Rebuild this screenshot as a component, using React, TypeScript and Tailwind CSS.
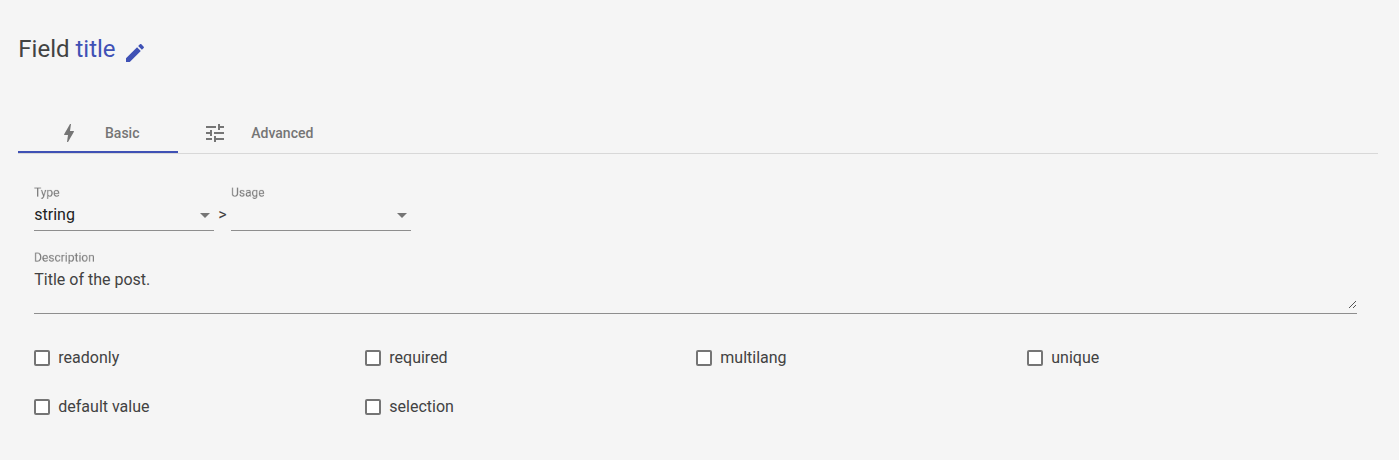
import React from "react";

const PATHS = {
  edit: "M3 17.25V21h3.75L17.81 9.94l-3.75-3.75L3 17.25zM20.71 7.04c.39-.39.39-1.02 0-1.41l-2.34-2.34c-.39-.39-1.02-.39-1.41 0l-1.83 1.83 3.75 3.75 1.83-1.83z",
  bolt: "M11 21h-1l1-7H7.5c-.58 0-.57-.32-.38-.66.19-.34.05-.08.07-.12C8.48 10.94 10.42 7.54 13 3h1l-1 7h3.5c.49 0 .56.33.47.51l-.07.15C12.96 17.55 11 21 11 21z",
  tune: "M3 17v2h6v-2H3zM3 5v2h10V5H3zm10 16v-2h8v-2h-8v-2h-2v6h2zM7 9v2H3v2h4v2h2V9H7zm14 4v-2H11v2h10zm-6-4h2V7h4V5h-4V3h-2v6z",
};

function Icon({ path, className }: { path: string; className: string }) {
  return (
    <svg viewBox="0 0 24 24" fill="currentColor" className={className}>
      <path d={path} />
    </svg>
  );
}

function FloatingLabel({ text }: { text: string }) {
  return (
    <div className="h-[15px] origin-top-left translate-y-[0.3px] scale-75 whitespace-nowrap text-[16px] leading-5 text-[#757575] will-change-transform">
      {text}
    </div>
  );
}

function Select({ label, value }: { label: string; value: string }) {
  return (
    <div className="h-[46px] w-[180px] border-b border-[#8e8e8e]">
      <FloatingLabel text={label} />
      <div className="flex h-[30px] items-center justify-between pr-1">
        <span className="pl-[0.3px] text-[16px] leading-[18px] text-[#212121]">{value}</span>
        <svg viewBox="0 0 10 5" className="h-[5px] w-[10px] fill-[#757575]">
          <path d="M0 0h10L5 5z" />
        </svg>
      </div>
    </div>
  );
}

function Check({ label }: { label: string }) {
  return (
    <label className="flex h-[49px] w-[331px] items-center gap-2">
      <span className="size-4 rounded-[2px] border-2 border-[#757575] bg-white" />
      <span className="pl-[0.3px] text-[16px] leading-6">{label}</span>
    </label>
  );
}

export default function App() {
  return (
    <main className="h-[460px] w-full bg-[#f5f5f5] pl-[18px] pr-[21px] font-[Roboto,sans-serif] text-[#424242]">
      <h1 className="flex h-[113px] items-start pt-[33px] text-[24px] leading-8">
        <span className="w-[105px] whitespace-nowrap pl-[0.3px]">
          Field <span className="text-[#3f51b5]">title</span>
        </span>
        <Icon path={PATHS.edit} className="mt-[8px] size-6 text-[#3f51b5]" />
      </h1>
      <nav className="flex h-[41px] border-b border-[#d8d8d8] text-[14px] font-medium text-[#757575]">
        <div className="flex h-[40px] w-[160px] items-center border-b-2 border-[#3f51b5] pl-[39px] pt-[2px]">
          <Icon path={PATHS.bolt} className="size-6" />
          <span className="ml-6">Basic</span>
        </div>
        <div className="flex h-[40px] items-center pl-[25px]">
          <Icon path={PATHS.tune} className="size-6" />
          <span className="ml-6 pl-[0.3px]">Advanced</span>
        </div>
      </nav>
      <section className="pl-4">
        <div className="flex pt-[31px]">
          <Select label="Type" value="string" />
          <span className="w-[17px] pt-[20px] text-center text-[16px] leading-5">&gt;</span>
          <Select label="Usage" value="" />
        </div>
        <div className="relative mt-[19px] h-[64px] w-[1323px] border-b border-[#8e8e8e]">
          <FloatingLabel text="Description" />
          <div className="pl-[0.3px] pt-[6px] text-[16px] leading-[18px]">Title of the post.</div>
          <svg viewBox="0 0 7 7" className="absolute bottom-[5px] right-[1px] size-[7px] fill-[#555]">
            <path d="M0 6h1v1H0zM1 5h1v1H1zM2 4h1v1H2zM3 3h1v1H3zM4 2h1v1H4zM5 1h1v1H5zM6 0h1v1H6zM4 6h1v1H4zM5 5h1v1H5zM6 4h1v1H6z" />
          </svg>
        </div>
        <div className="flex flex-wrap pt-[19px]">
          <Check label="readonly" />
          <Check label="required" />
          <Check label="multilang" />
          <Check label="unique" />
          <Check label="default value" />
          <Check label="selection" />
        </div>
      </section>
    </main>
  );
}
